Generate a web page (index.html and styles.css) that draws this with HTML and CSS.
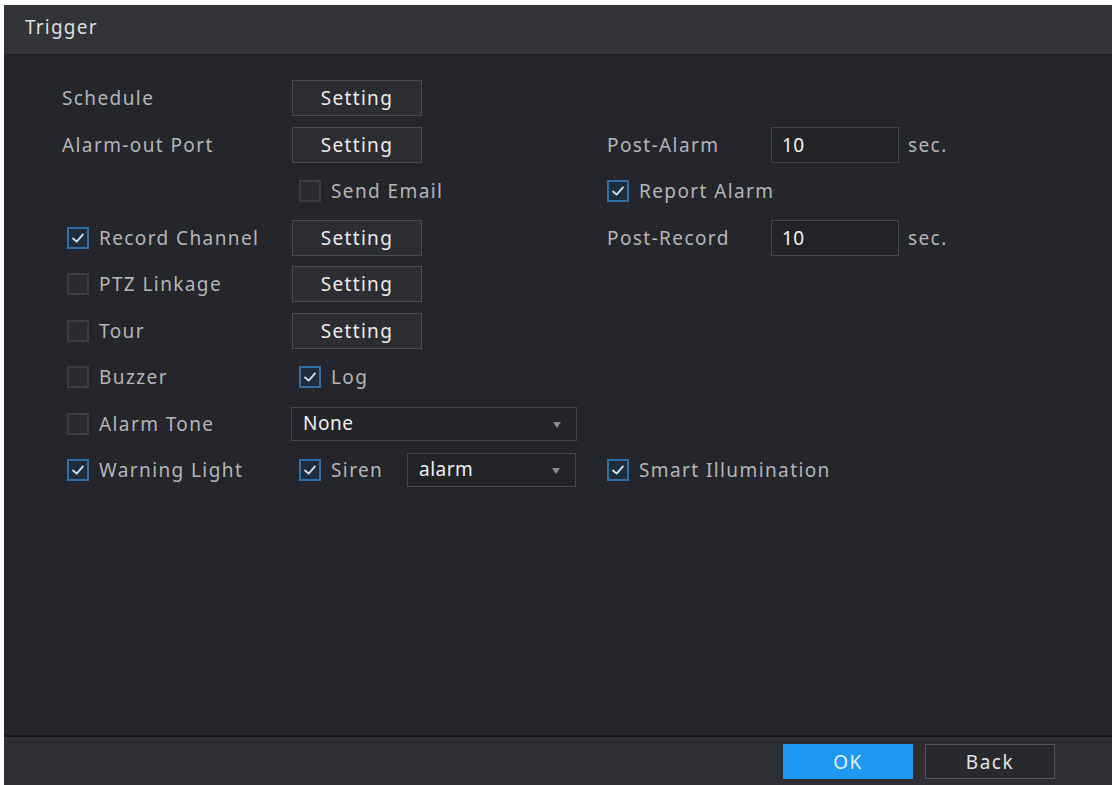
FILE: index.html
```html
<!DOCTYPE html>
<html lang="en">
<head>
  <meta charset="UTF-8" />
  <title>Trigger</title>
  <link rel="stylesheet" href="styles.css">
</head>
<body>
  <div class="dialog">
    <div class="title">Trigger</div>

    <div class="body">
      <div class="row">
        <span class="lbl">Schedule</span>
        <span><button class="btn">Setting</button></span>
      </div>

      <div class="row">
        <span class="lbl">Alarm-out Port</span>
        <span><button class="btn">Setting</button></span>
        <span class="lbl">Post-Alarm</span>
        <span class="field">10</span>
        <span class="lbl">sec.</span>
      </div>

      <div class="row">
        <span></span>
        <label class="chk inset"><i class="box"></i>Send Email</label>
        <label class="chk wide"><i class="box on"><svg viewBox="0 0 20 20"><polyline points="4.5,10.5 8.5,14 15.5,6"/></svg></i>Report Alarm</label>
      </div>

      <div class="row">
        <label class="chk first"><i class="box on"><svg viewBox="0 0 20 20"><polyline points="4.5,10.5 8.5,14 15.5,6"/></svg></i>Record Channel</label>
        <span><button class="btn">Setting</button></span>
        <span class="lbl">Post-Record</span>
        <span class="field">10</span>
        <span class="lbl">sec.</span>
      </div>

      <div class="row">
        <label class="chk first"><i class="box"></i>PTZ Linkage</label>
        <span><button class="btn">Setting</button></span>
      </div>

      <div class="row">
        <label class="chk first"><i class="box"></i>Tour</label>
        <span><button class="btn">Setting</button></span>
      </div>

      <div class="row">
        <label class="chk first"><i class="box"></i>Buzzer</label>
        <label class="chk inset"><i class="box on"><svg viewBox="0 0 20 20"><polyline points="4.5,10.5 8.5,14 15.5,6"/></svg></i>Log</label>
      </div>

      <div class="row">
        <label class="chk first"><i class="box"></i>Alarm Tone</label>
        <span class="select tone">None<i class="arrow"></i></span>
      </div>

      <div class="row">
        <label class="chk first"><i class="box on"><svg viewBox="0 0 20 20"><polyline points="4.5,10.5 8.5,14 15.5,6"/></svg></i>Warning Light</label>
        <span class="pair">
          <label class="chk inset"><i class="box on"><svg viewBox="0 0 20 20"><polyline points="4.5,10.5 8.5,14 15.5,6"/></svg></i>Siren</label>
          <span class="select siren">alarm<i class="arrow"></i></span>
        </span>
        <label class="chk wide"><i class="box on"><svg viewBox="0 0 20 20"><polyline points="4.5,10.5 8.5,14 15.5,6"/></svg></i>Smart Illumination</label>
      </div>
    </div>

    <div class="footer">
      <button class="ok">OK</button>
      <button class="back">Back</button>
    </div>
  </div>
</body>
</html>
```

FILE: styles.css
```css
body {
  margin: 0;
  background: #fff;
  font-family: "Noto Sans", "Open Sans", sans-serif;
}
.dialog {
  margin: 5px 0 0 4px;
  height: 780px;
  display: flex;
  flex-direction: column;
  background: #25262b;
  color: #b4b5ba;
  font-size: 19px;
  letter-spacing: 1.4px;
  overflow: hidden;
}
.title {
  height: 50px;
  flex: none;
  background: #333439;
  border-bottom: 1px solid #1f2024;
  box-sizing: border-box;
  padding: 9px 0 0 21px;
  font-size: 19px;
  letter-spacing: 1.2px;
  color: #dedee0;
}
.body {
  flex: 1;
  padding: 25px 0 0 58px;
  display: flex;
  flex-direction: column;
  gap: 10.5px;
}
.row {
  display: grid;
  grid-template-columns: 230px 315px 164px 137px 1fr;
  height: 36px;
  align-items: center;
}
.lbl {
  white-space: nowrap;
}
.btn {
  width: 130px;
  height: 36px;
  background: #2c2d32;
  border: 1px solid #4a4b51;
  color: #ececec;
  font-family: inherit;
  font-size: 19px;
  letter-spacing: 1.3px;
  padding: 0;
}
.field {
  width: 128px;
  height: 36px;
  box-sizing: border-box;
  border: 1px solid #45464c;
  background: #222327;
  color: #f2f2f2;
  padding: 4px 0 0 10px;
  letter-spacing: 0.5px;
}
.chk {
  display: flex;
  align-items: center;
  gap: 10px;
  white-space: nowrap;
}
.chk.first {
  padding-left: 5px;
}
.chk.inset {
  padding-left: 7px;
}
.chk.wide {
  grid-column: 3 / 6;
}
.box {
  width: 22px;
  height: 22px;
  box-sizing: border-box;
  border: 2px solid #3c3d42;
  background: #2a2b30;
  flex: none;
  display: flex;
}
.box.on {
  border-color: #2d6fa6;
  background: #1f2c3b;
}
.box svg {
  width: 100%;
  height: 100%;
  fill: none;
  stroke: #cfe6fa;
  stroke-width: 2;
  stroke-linecap: round;
  stroke-linejoin: round;
}
.select {
  position: relative;
  height: 34px;
  box-sizing: border-box;
  border: 1px solid #46474d;
  background: #232428;
  color: #f0f0f0;
  padding: 2px 0 0 11px;
  letter-spacing: 0.5px;
}
.tone {
  width: 286px;
  margin-left: -1px;
}
.pair {
  display: flex;
  align-items: center;
}
.pair .chk {
  width: 108px;
}
.siren {
  width: 169px;
}
.arrow {
  position: absolute;
  right: 15px;
  top: 14px;
  border-left: 4px solid transparent;
  border-right: 4px solid transparent;
  border-top: 6px solid #8d8e93;
}
.footer {
  height: 50px;
  flex: none;
  box-sizing: border-box;
  border-top: 2px solid #18181b;
  background: #2e2e33;
  display: flex;
  justify-content: flex-end;
  align-items: flex-start;
  gap: 12px;
  padding: 7px 57px 0 0;
}
.ok, .back {
  width: 130px;
  height: 35px;
  font-family: inherit;
  font-size: 19px;
  letter-spacing: 1.5px;
  padding: 0;
}
.ok {
  background: #1e98f2;
  border: none;
  color: #e4f3ff;
}
.back {
  background: #28292e;
  border: 1px solid #55565c;
  color: #e2e2e4;
}
```
